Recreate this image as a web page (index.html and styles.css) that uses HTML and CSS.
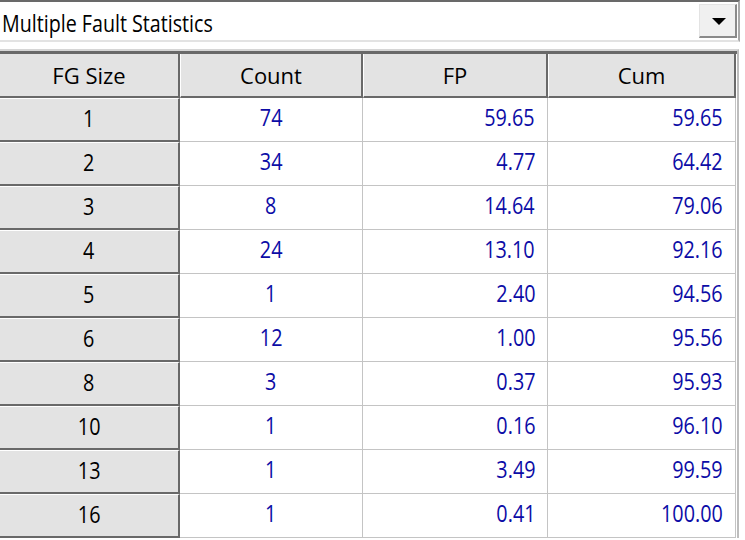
FILE: index.html
```html
<!DOCTYPE html>
<html>
<head>
<meta charset="utf-8">
<link rel="stylesheet" href="styles.css">
</head>
<body>
<div class="combo">
  <div class="combo-text"><span class="t">Multiple Fault Statistics</span></div>
  <div class="combo-btn"><span class="arrow"></span></div>
</div>
<div class="grid-wrap">
  <div class="grid">
    <div class="hcell">FG Size</div>
    <div class="hcell">Count</div>
    <div class="hcell">FP</div>
    <div class="hcell">Cum</div>

    <div class="rh"><span class="t">1</span></div><div class="c center"><span class="t">74</span></div><div class="c"><span class="t">59.65</span></div><div class="c"><span class="t">59.65</span></div>
    <div class="rh"><span class="t">2</span></div><div class="c center"><span class="t">34</span></div><div class="c"><span class="t">4.77</span></div><div class="c"><span class="t">64.42</span></div>
    <div class="rh"><span class="t">3</span></div><div class="c center"><span class="t">8</span></div><div class="c"><span class="t">14.64</span></div><div class="c"><span class="t">79.06</span></div>
    <div class="rh"><span class="t">4</span></div><div class="c center"><span class="t">24</span></div><div class="c"><span class="t">13.10</span></div><div class="c"><span class="t">92.16</span></div>
    <div class="rh"><span class="t">5</span></div><div class="c center"><span class="t">1</span></div><div class="c"><span class="t">2.40</span></div><div class="c"><span class="t">94.56</span></div>
    <div class="rh"><span class="t">6</span></div><div class="c center"><span class="t">12</span></div><div class="c"><span class="t">1.00</span></div><div class="c"><span class="t">95.56</span></div>
    <div class="rh"><span class="t">8</span></div><div class="c center"><span class="t">3</span></div><div class="c"><span class="t">0.37</span></div><div class="c"><span class="t">95.93</span></div>
    <div class="rh"><span class="t">10</span></div><div class="c center"><span class="t">1</span></div><div class="c"><span class="t">0.16</span></div><div class="c"><span class="t">96.10</span></div>
    <div class="rh"><span class="t">13</span></div><div class="c center"><span class="t">1</span></div><div class="c"><span class="t">3.49</span></div><div class="c"><span class="t">99.59</span></div>
    <div class="rh"><span class="t">16</span></div><div class="c center"><span class="t">1</span></div><div class="c"><span class="t">0.41</span></div><div class="c"><span class="t">100.00</span></div>
  </div>
</div>
</body>
</html>
```
FILE: styles.css
```css
html, body {
  margin: 0;
  padding: 0;
  background: #ffffff;
  font-family: "Open Sans", "Noto Sans", sans-serif;
  overflow: hidden;
}

.t {
  display: inline-block;
  transform: scaleX(0.86);
  transform-origin: center center;
}

.combo {
  box-sizing: border-box;
  width: 740px;
  height: 42px;
  border-top: 2px solid #696969;
  border-right: 2px solid #a9a9a9;
  border-bottom: 2px solid #e3e3e3;
  display: flex;
  align-items: center;
  justify-content: space-between;
}

.combo-text {
  padding-left: 2px;
  font-size: 23px;
  color: #000;
  line-height: 26px;
  margin-top: 3px;
  white-space: nowrap;
}

.combo-text .t {
  transform: scaleX(0.855);
  transform-origin: left center;
}

.combo-btn {
  box-sizing: border-box;
  width: 38px;
  height: 34px;
  margin-right: 1px;
  background: #f0f0f0;
  border-left: 1px solid #e3e3e3;
  border-top: 1px solid #e3e3e3;
  border-right: 2px solid #8a8a8a;
  border-bottom: 2px solid #8a8a8a;
  display: flex;
  align-items: center;
  justify-content: center;
}

.arrow {
  width: 0;
  height: 0;
  border-left: 7px solid transparent;
  border-right: 7px solid transparent;
  border-top: 7px solid #000;
  margin-top: 1px;
  margin-left: 2px;
}

.grid-wrap {
  margin-top: 7px;
  width: 739px;
  box-sizing: border-box;
  border-top: 2px solid #d6d6d6;
  border-right: 2px solid #bdbdbd;
}

.grid {
  display: grid;
  grid-template-columns: 180px 183px 185px 188px;
  grid-auto-rows: 44px;
  border-top: 3px solid #696969;
}

.hcell {
  box-sizing: border-box;
  background: #e3e3e3;
  border-left: 1px solid #ffffff;
  border-right: 2px solid #696969;
  border-bottom: 2px solid #696969;
  display: flex;
  align-items: center;
  justify-content: center;
  color: #000;
  padding-bottom: 1px;
  font-size: 22px;
}

.hcell:first-child {
  border-left: none;
}

.rh {
  box-sizing: border-box;
  background: #e3e3e3;
  border-top: 1px solid #ffffff;
  border-right: 2px solid #696969;
  border-bottom: 2px solid #696969;
  display: flex;
  align-items: center;
  justify-content: center;
  color: #000;
  padding-bottom: 4px;
  font-size: 23px;
}

.c {
  box-sizing: border-box;
  background: #ffffff;
  border-right: 1px solid #c4c4c4;
  border-bottom: 1px solid #c4c4c4;
  display: flex;
  align-items: center;
  justify-content: flex-end;
  padding-right: 12px;
  padding-bottom: 6px;
  color: #0c0ca6;
  font-size: 23px;
}

.c .t {
  transform-origin: right center;
}

.c.center {
  justify-content: center;
  padding-right: 0;
}

.c.center .t {
  transform-origin: center center;
}
```
